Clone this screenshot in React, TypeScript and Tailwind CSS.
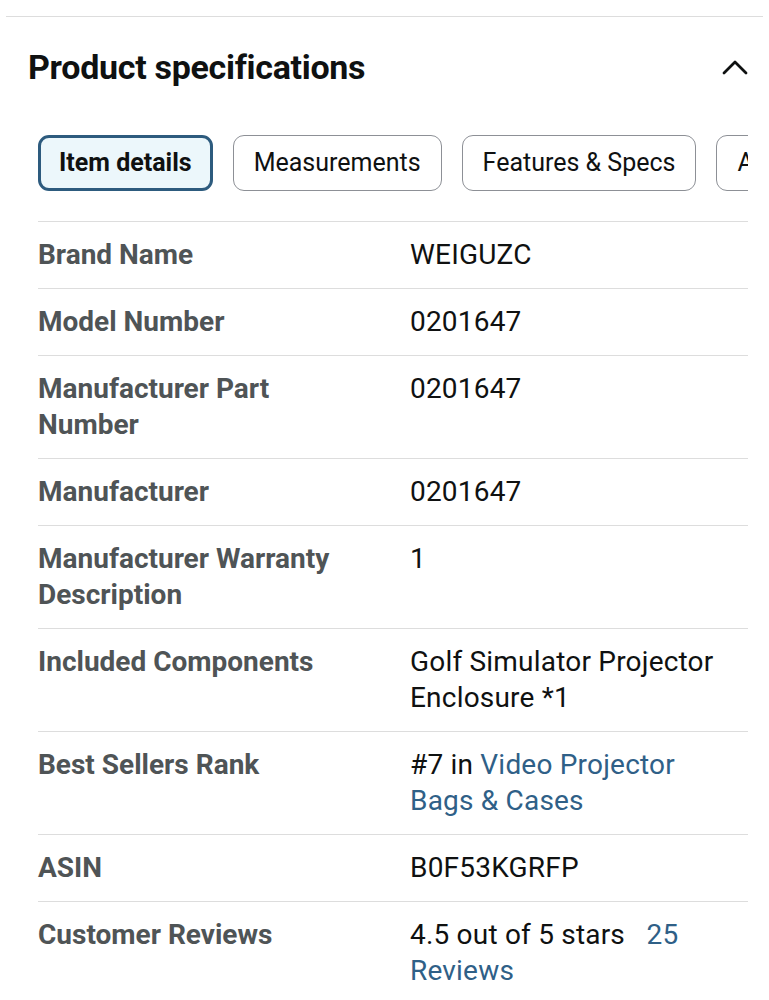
import React from "react";

type Row = { label: string; value: React.ReactNode };

const link = "text-[#2f6087]";

const rows: Row[] = [
  { label: "Brand Name", value: "WEIGUZC" },
  { label: "Model Number", value: "0201647" },
  { label: "Manufacturer Part Number", value: "0201647" },
  { label: "Manufacturer", value: "0201647" },
  { label: "Manufacturer Warranty Description", value: "1" },
  { label: "Included Components", value: "Golf Simulator Projector Enclosure *1" },
  {
    label: "Best Sellers Rank",
    value: (
      <>
        #7 in <span className={link}>Video Projector Bags &amp; Cases</span>
      </>
    ),
  },
  { label: "ASIN", value: "B0F53KGRFP" },
  {
    label: "Customer Reviews",
    value: (
      <>
        4.5 out of 5 stars&nbsp;&nbsp; <span className={link}>25 Reviews</span>
      </>
    ),
  },
];

const tabs = ["Item details", "Measurements", "Features & Specs", "Additional details"];

export default function App() {
  return (
    <div className="min-h-[1000px] bg-white font-['Roboto',sans-serif] text-[#0f1111]">
      <div className="pt-4 px-[6px]">
        <div className="h-px bg-[#dddddd]" />
      </div>

      <div className="flex items-center justify-between pl-[28px] pr-[20px] pt-[30px] pb-[48px]">
        <h2 className="text-[34px] font-bold leading-[40px] tracking-[-0.3px]">
          Product specifications
        </h2>
        <svg width="28" height="18" viewBox="0 0 28 18" fill="none">
          <path d="M3 15 L14 4 L25 15" stroke="#0f1111" strokeWidth="2.8" strokeLinecap="round" strokeLinejoin="round" />
        </svg>
      </div>

      <div className="pl-[38px] pr-[21px]">
        <div className="flex gap-[20px] overflow-hidden">
          {tabs.map((t, i) => (
            <div
              key={t}
              className={
                i === 0
                  ? "shrink-0 h-[56px] px-[18px] flex items-center rounded-[11px] border-[3px] border-[#2d5b7e] bg-[#ecf7fb] text-[25px] font-bold"
                  : "shrink-0 h-[56px] px-[20px] flex items-center rounded-[11px] border border-[#8d9096] bg-white text-[25px]"
              }
            >
              {t}
            </div>
          ))}
        </div>

        <div className="mt-[30px]">
          {rows.map((r) => (
            <div
              key={r.label}
              className="grid grid-cols-[372px_1fr] border-t border-[#dddddd] py-[15px] text-[28px] leading-[36px]"
            >
              <div className="font-bold text-[#4f5456] pr-[52px]">{r.label}</div>
              <div className="tracking-[0.2px] pr-[16px]">{r.value}</div>
            </div>
          ))}
        </div>
      </div>
    </div>
  );
}
